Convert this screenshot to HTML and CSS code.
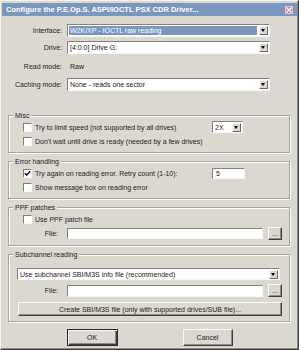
FILE: index.html
```html
<!DOCTYPE html>
<html lang="en">
<head>
  <meta charset="UTF-8">
  <title>Configure the P.E.Op.S. ASPI/IOCTL PSX CDR Driver</title>
  <link rel="stylesheet" href="styles.css">
</head>
<body>

  <div class="window">
    <!-- Barra de titulo -->
    <div class="titlebar">
      <span class="title">Configure the P.E.Op.S. ASPI/IOCTL PSX CDR Driver...</span>
      <span class="close">
        <svg width="6" height="6" viewBox="0 0 6 6"><path d="M0.5 0.5 L5.5 5.5 M5.5 0.5 L0.5 5.5" stroke="#fff" stroke-width="1.3"/></svg>
      </span>
    </div>

    <!-- Opciones principales -->
    <div class="form">
      <span class="label">Interface:</span>
      <div class="combo combo-sel"><span class="val">W2K/XP - IOCTL raw reading</span><span class="drop"></span></div>

      <span class="label">Drive:</span>
      <div class="combo"><span class="val">[4:0:0] Drive G:</span><span class="drop"></span></div>

      <span class="label">Read mode:</span>
      <span class="plain">Raw</span>

      <span class="label">Caching mode:</span>
      <div class="combo"><span class="val">None - reads one sector</span><span class="drop"></span></div>
    </div>

    <fieldset class="group grupo-misc">
      <legend>Misc</legend>
      <div class="check-row">
        <span class="box"></span>
        <span class="row-text">Try to limit speed (not supported by all drives)</span>
        <div class="combo combo-speed"><span class="val">2X</span><span class="drop"></span></div>
      </div>
      <div class="check-row">
        <span class="box"></span>
        <span>Don't wait until drive is ready (needed by a few drives)</span>
      </div>
    </fieldset>

    <fieldset class="group grupo-error">
      <legend>Error handling</legend>
      <div class="check-row">
        <span class="box">
          <svg width="7" height="7" viewBox="0 0 7 7"><path d="M0.8 3.2 L2.7 5.1 L6.2 1.3" fill="none" stroke="#000" stroke-width="1.4"/></svg>
        </span>
        <span class="row-text">Try again on reading error. Retry count (1-10):</span>
        <span class="edit edit-retry">5</span>
      </div>
      <div class="check-row">
        <span class="box"></span>
        <span>Show message box on reading error</span>
      </div>
    </fieldset>

    <fieldset class="group grupo-ppf">
      <legend>PPF patches</legend>
      <div class="check-row">
        <span class="box"></span>
        <span>Use PPF patch file</span>
      </div>
      <div class="file-row">
        <span class="file-label">File:</span>
        <span class="edit edit-file"></span>
        <button class="btn btn-browse">...</button>
      </div>
    </fieldset>

    <fieldset class="group grupo-sub">
      <legend>Subchannel reading</legend>
      <div class="combo combo-sub"><span class="val">Use subchannel SBI/M3S info file (recommended)</span><span class="drop"></span></div>
      <div class="file-row file-row-sub">
        <span class="file-label">File:</span>
        <span class="edit edit-file"></span>
        <button class="btn btn-browse">...</button>
      </div>
      <button class="btn btn-create">Create SBI/M3S file (only with supported drives/SUB file)...</button>
    </fieldset>

    <div class="buttons">
      <button class="btn btn-main btn-default">OK</button>
      <button class="btn btn-main">Cancel</button>
    </div>
  </div>

</body>
</html>
```

FILE: styles.css
```css
* {
  box-sizing: border-box;
}

body {
  margin: 0;
  background: #dbd8d0;
  font-family: "Liberation Sans", Arial, sans-serif;
  font-size: 7px;
  color: #1c1c1c;
}

.window {
  width: 299px;
  height: 350px;
  padding: 1px;
  background: #dbd8d0;
  border: 1px solid;
  border-color: #f4f3ef #3c3c3c #3c3c3c #f4f3ef;
  box-shadow: inset -1px -1px 0 #8c8a84;
}

/* Barra de titulo */
.titlebar {
  display: flex;
  align-items: center;
  height: 13px;
  margin-top: 1px;
  padding-left: 4px;
  background: #7b97bf;
  color: #fff;
  font-weight: bold;
  font-size: 7.5px;
}

.close {
  display: flex;
  align-items: center;
  justify-content: center;
  width: 8px;
  height: 8px;
  margin-left: auto;
  margin-right: 4px;
  background: #c67f8e;
  border: 1px solid #e8c4cc;
}

/* Formulario superior */
.form {
  display: grid;
  grid-template-columns: 60px 203px;
  grid-template-rows: 13px 13px 16px 13px;
  column-gap: 5px;
  row-gap: 4px;
  align-items: center;
  margin-top: 8px;
}

.label {
  text-align: right;
}

.plain {
  padding-left: 3px;
}

.combo {
  display: flex;
  align-items: center;
  height: 13px;
  background: #fff;
  border: 1px solid;
  border-color: #85827c #f8f7f4 #f8f7f4 #85827c;
}

.val {
  flex: 1;
  align-self: stretch;
  padding-left: 2px;
  line-height: 11px;
  white-space: nowrap;
  overflow: hidden;
}

.combo-sel .val {
  margin: 1px 2px 1px 1px;
  padding-left: 1px;
  line-height: 9px;
  background: #7b97c0;
  color: #fff;
}

.drop {
  position: relative;
  width: 9px;
  height: 9px;
  margin-right: 1px;
  background: #dbd8d0;
  border: 1px solid;
  border-color: #fbfaf7 #6f6d67 #6f6d67 #fbfaf7;
}

.drop::after {
  content: "";
  position: absolute;
  left: 1px;
  top: 2px;
  border-left: 2.5px solid transparent;
  border-right: 2.5px solid transparent;
  border-top: 3px solid #000;
}

/* Grupos */
.group {
  min-width: 0;
  margin: 0 7px 0 6px;
  padding: 0 0 4px 0;
  border: 1px solid #a5a39b;
  box-shadow: inset 1px 1px 0 #fff, 1px 1px 0 #fff;
}

.group legend {
  margin-left: 4px;
  padding: 0 2px;
  line-height: 9px;
  background: #dbd8d0;
}

.grupo-misc {
  margin-top: 20px;
}

.grupo-error,
.grupo-ppf,
.grupo-sub {
  margin-top: 4px;
}

.grupo-sub {
  padding-bottom: 5px;
}

.check-row {
  display: flex;
  align-items: center;
  height: 14px;
  padding-left: 14px;
  white-space: nowrap;
}

.box {
  display: flex;
  align-items: center;
  justify-content: center;
  width: 9px;
  height: 9px;
  margin-right: 3px;
  background: #fff;
  border: 1px solid;
  border-color: #7f7d77 #f8f7f4 #f8f7f4 #7f7d77;
}

.row-text {
  width: 177px;
}

.combo-speed {
  width: 31px;
  height: 12px;
}

.edit {
  display: block;
  height: 11px;
  padding-left: 3px;
  line-height: 9px;
  background: #fff;
  border: 1px solid;
  border-color: #85827c #f8f7f4 #f8f7f4 #85827c;
}

.edit-retry {
  width: 33px;
}

.file-row {
  display: flex;
  align-items: center;
  height: 15px;
}

.file-label {
  width: 49px;
  margin-right: 9px;
  text-align: right;
}

.edit-file {
  width: 196px;
}

.btn {
  padding: 0;
  font-family: "Liberation Sans", Arial, sans-serif;
  font-size: 7px;
  color: #1c1c1c;
  background: #dbd8d0;
  border: 1px solid;
  border-color: #fbfaf7 #3f3f3f #3f3f3f #fbfaf7;
  box-shadow: inset -1px -1px 0 #8f8c86;
}

.btn-browse {
  width: 14px;
  height: 13px;
  margin-left: 5px;
  line-height: 9px;
}

.combo-sub {
  height: 12px;
  margin: 9px 9px 0 8px;
}

.file-row-sub {
  height: 13px;
  margin-top: 4px;
}

.file-row-sub .edit-file {
  height: 12px;
}

.btn-create {
  display: block;
  width: 264px;
  height: 14px;
  margin: 5px 0 0 9px;
}

.buttons {
  display: flex;
  justify-content: center;
  gap: 65px;
  margin-top: 7px;
}

.btn-main {
  width: 50px;
  height: 17px;
}

.btn-default {
  width: 51px;
  border-color: #2a2a2a;
  box-shadow: inset 1px 1px 0 #fbfaf7, inset -1px -1px 0 #3f3f3f, inset -2px -2px 0 #8f8c86;
}
```
